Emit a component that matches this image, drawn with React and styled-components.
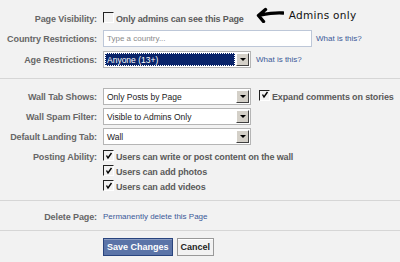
import React from 'react'
import styled, { createGlobalStyle } from 'styled-components'

const Global = createGlobalStyle`
  html, body {
    margin: 0;
    background: #f2f2f2;
  }
  body {
    font-family: 'Liberation Sans', Arial, sans-serif;
    font-size: 8px;
    color: #333;
  }
`

const Page = styled.div`
  width: 400px;
  height: 262px;
  overflow: hidden;
`
const Section = styled.div`
  display: flex;
  flex-direction: column;
  gap: ${(p) => p.gap || 0}px;
  padding: ${(p) => p.pad || '0'};
  border-bottom: ${(p) => (p.last ? 'none' : '1px solid #d6d6d6')};
`
const Row = styled.div`
  display: grid;
  grid-template-columns: 97px 1fr;
  column-gap: 6px;
  align-items: ${(p) => (p.top ? 'start' : 'center')};
  height: ${(p) => p.h || 17}px;
  margin-top: ${(p) => p.mt || 0}px;
`
const Label = styled.div`
  text-align: right;
  font-weight: bold;
  color: #666;
  font-size: 9px;
  letter-spacing: -0.1px;
  white-space: nowrap;
  line-height: ${(p) => p.lh || 'normal'};
`
const Field = styled.div`
  display: flex;
  align-items: center;
  gap: ${(p) => p.gap || 5}px;
`
const Stack = styled.div`
  display: flex;
  flex-direction: column;
  gap: 1px;
`
const Check = styled.label`
  display: flex;
  align-items: center;
  gap: 2px;
  height: 14px;
  font-weight: bold;
  color: #5a5a5a;
  font-size: 9px;
  letter-spacing: -0.15px;
  white-space: nowrap;
`
const Box = styled.span`
  width: 11px;
  height: 11px;
  box-sizing: border-box;
  border-top: 1px solid #222;
  border-left: 1px solid #222;
  border-right: 1px solid #fff;
  border-bottom: 1px solid #fff;
  background: #f2f2f2;
  display: flex;
  align-items: center;
  justify-content: center;
  margin-top: -3px;
  flex: none;
`
const Input = styled.div`
  width: 209px;
  height: 17px;
  box-sizing: border-box;
  border: 1px solid #bdc7d8;
  background: #fff;
  color: #8a8a8a;
  font-size: 8px;
  padding-left: 3px;
  display: flex;
  align-items: center;
`
const Select = styled.div`
  width: 148px;
  height: 17px;
  box-sizing: border-box;
  border: 1px solid #b5b5b5;
  background: #fff;
  display: flex;
  align-items: stretch;
  padding: 1px;
`
const Value = styled.div`
  flex: 1;
  display: flex;
  align-items: center;
  padding-left: 2px;
  font-size: 8.5px;
  color: ${(p) => (p.active ? '#fff' : '#222')};
  background: ${(p) => (p.active ? '#0a246a' : '#fff')};
  outline: ${(p) => (p.active ? '1px dotted #fff' : 'none')};
  outline-offset: -1px;
`
const Arrow = styled.div`
  width: 13px;
  margin-left: 1px;
  background: #d4d0c8;
  border-top: 1px solid #fff;
  border-left: 1px solid #fff;
  border-right: 1px solid #404040;
  border-bottom: 1px solid #404040;
  box-sizing: border-box;
  display: flex;
  align-items: center;
  justify-content: center;
  &:after {
    content: '';
    border-left: 3px solid transparent;
    border-right: 3px solid transparent;
    border-top: 3px solid #000;
  }
`
const Link = styled.a`
  color: #3b5998;
  font-size: 8px;
  text-decoration: none;
  white-space: nowrap;
`
const Note = styled.div`
  display: flex;
  align-items: center;
  gap: 5px;
  margin-left: 7px;
  margin-top: -8px;
  font-family: 'DejaVu Sans', sans-serif;
  font-size: 10.5px;
  letter-spacing: 0.3px;
  color: #111;
`
const Buttons = styled.div`
  display: flex;
  gap: 4px;
  padding-left: 103px;
  padding-top: 7px;
`
const Button = styled.button`
  height: 18px;
  padding: 0 3px;
  font-family: 'Liberation Sans', Arial, sans-serif;
  font-weight: bold;
  font-size: 9px;
  border: 1px solid ${(p) => (p.primary ? '#29447e' : '#999')};
  background: ${(p) => (p.primary ? '#5b74a8' : '#f2f2f2')};
  color: ${(p) => (p.primary ? '#fff' : '#222')};
  box-shadow: inset 0 1px 0 ${(p) => (p.primary ? '#8a9cc2' : '#fff')};
`

function Checkbox({ checked, children }) {
  return (
    <Check>
      <Box>
        {checked && (
          <svg width="8" height="8" viewBox="0 0 8 8">
            <path d="M1.5 3.5 L3 6 L6.5 1" stroke="#000" strokeWidth="1.4" fill="none" />
          </svg>
        )}
      </Box>
      {children}
    </Check>
  )
}

function Dropdown({ value, active }) {
  return (
    <Select>
      <Value active={active}>{value}</Value>
      <Arrow />
    </Select>
  )
}

export default function App() {
  return (
    <Page>
      <Global />
      <Section gap={3} pad="11px 0 10px">
        <Row h={16}>
          <Label>Page Visibility:</Label>
          <Field>
            <Checkbox>Only admins can see this Page</Checkbox>
            <Note>
              <svg width="28" height="16" viewBox="0 0 28 16">
                <path
                  d="M27 6 C20 5.5 12 6.5 4 8 M9.5 2.5 L2.5 8.5 L7.5 14.5"
                  stroke="#000"
                  strokeWidth="3.4"
                  fill="none"
                  strokeLinecap="round"
                  strokeLinejoin="round"
                />
              </svg>
              Admins only
            </Note>
          </Field>
        </Row>
        <Row>
          <Label>Country Restrictions:</Label>
          <Field gap={4}>
            <Input>Type a country...</Input>
            <Link>What is this?</Link>
          </Field>
        </Row>
        <Row mt={1}>
          <Label>Age Restrictions:</Label>
          <Field gap={5}>
            <Dropdown value="Anyone (13+)" active />
            <Link>What is this?</Link>
          </Field>
        </Row>
      </Section>
      <Section gap={3} pad="9px 0 6px">
        <Row>
          <Label>Wall Tab Shows:</Label>
          <Field gap={8}>
            <Dropdown value="Only Posts by Page" />
            <Checkbox checked>Expand comments on stories</Checkbox>
          </Field>
        </Row>
        <Row>
          <Label>Wall Spam Filter:</Label>
          <Field>
            <Dropdown value="Visible to Admins Only" />
          </Field>
        </Row>
        <Row>
          <Label>Default Landing Tab:</Label>
          <Field>
            <Dropdown value="Wall" />
          </Field>
        </Row>
        <Row top h={44} mt={2}>
          <Label lh="14px">Posting Ability:</Label>
          <Stack>
            <Checkbox checked>Users can write or post content on the wall</Checkbox>
            <Checkbox checked>Users can add photos</Checkbox>
            <Checkbox checked>Users can add videos</Checkbox>
          </Stack>
        </Row>
      </Section>
      <Section pad="8px 0 6px">
        <Row h={15}>
          <Label>Delete Page:</Label>
          <Field>
            <Link>Permanently delete this Page</Link>
          </Field>
        </Row>
      </Section>
      <Buttons>
        <Button primary>Save Changes</Button>
        <Button>Cancel</Button>
      </Buttons>
    </Page>
  )
}
